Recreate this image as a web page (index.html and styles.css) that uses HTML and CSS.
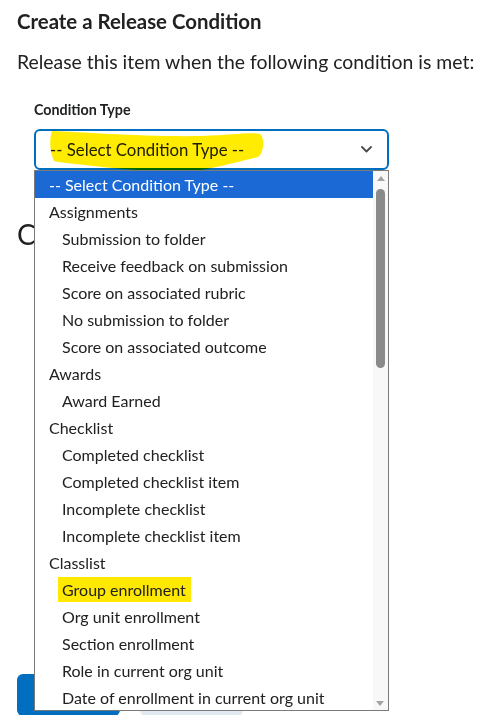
FILE: index.html
```html
<!DOCTYPE html>
<html lang="en">
<head>
    <meta charset="UTF-8">
    <meta name="viewport" content="width=device-width, initial-scale=1.0">
    <title>Create a Release Condition</title>
    <link rel="stylesheet" href="styles.css">
</head>
<body>
    <div class="dialog">
        <h1>Create a Release Condition</h1>
        <p class="intro">Release this item when the following condition is met:</p>

        <div class="field">
            <label class="field-label">Condition Type</label>
            <div class="select">
                <span class="select-value">-- Select Condition Type --</span>
                <svg class="chevron" width="11" height="7" viewBox="0 0 11 7">
                    <path d="M1 1 L5.5 5.5 L10 1" fill="none" stroke="#494c4e" stroke-width="1.8" stroke-linecap="round" stroke-linejoin="round"/>
                </svg>
                <!-- highlighter mark -->
                <svg class="marker" width="216" height="44" viewBox="0 0 216 44">
                    <path d="M2,2 C32,3 92,8 152,7 C182,6 202,3 210,5 C215,8 214,24 208,28 C192,32 172,37 152,41 C122,44 92,42 62,39 C37,36 12,34 4,32 C0,24 -1,9 2,2 Z" fill="#ffec00"/>
                </svg>

                <div class="options">
                    <ul class="option-list">
                        <li class="option selected">-- Select Condition Type --</li>
                        <li class="option group">Assignments</li>
                        <li class="option">Submission to folder</li>
                        <li class="option">Receive feedback on submission</li>
                        <li class="option">Score on associated rubric</li>
                        <li class="option">No submission to folder</li>
                        <li class="option">Score on associated outcome</li>
                        <li class="option group">Awards</li>
                        <li class="option">Award Earned</li>
                        <li class="option group">Checklist</li>
                        <li class="option">Completed checklist</li>
                        <li class="option">Completed checklist item</li>
                        <li class="option">Incomplete checklist</li>
                        <li class="option">Incomplete checklist item</li>
                        <li class="option group">Classlist</li>
                        <li class="option"><mark>Group enrollment</mark></li>
                        <li class="option">Org unit enrollment</li>
                        <li class="option">Section enrollment</li>
                        <li class="option">Role in current org unit</li>
                        <li class="option">Date of enrollment in current org unit</li>
                    </ul>
                    <div class="scrollbar">
                        <span class="arrow up"></span>
                        <span class="thumb"></span>
                        <span class="arrow down"></span>
                    </div>
                </div>
            </div>
        </div>

        <h2>Conditions</h2>

        <div class="actions">
            <button class="btn primary">Create</button>
            <button class="btn">Cancel</button>
        </div>
    </div>
</body>
</html>
```

FILE: styles.css
```css
body {
    margin: 0;
    font-family: Lato, "Open Sans", sans-serif;
    color: #202122;
    background: #ffffff;
    overflow: hidden;
}
.dialog {
    padding: 0 17px;
    height: 715px;
}
h1 {
    font-size: 20.4px;
    font-weight: bold;
    margin: 0;
    padding-top: 8px;
    line-height: 26px;
}
.intro {
    font-size: 19.4px;
    margin: 15px 0 0;
    line-height: 26px;
    white-space: nowrap;
    color: #202122;
}
.field {
    padding-left: 17px;
    margin-top: 26px;
}
.field-label {
    display: block;
    font-size: 14.3px;
    font-weight: bold;
    line-height: 18px;
}
.select {
    position: relative;
    margin-top: 10px;
    width: 355px;
    height: 41px;
    box-sizing: border-box;
    border: 2px solid #006fbf;
    border-radius: 6px;
    display: flex;
    align-items: center;
    justify-content: space-between;
    padding: 0 15px 0 14px;
}
.select-value {
    font-size: 16.8px;
    position: relative;
    z-index: 1;
}
.chevron {
    position: relative;
    z-index: 1;
}
.marker {
    position: absolute;
    left: 14px;
    top: -2px;
    overflow: visible;
    mix-blend-mode: multiply;
    z-index: 2;
}
.options {
    position: absolute;
    left: -2px;
    top: 39px;
    width: 355px;
    height: 541px;
    box-sizing: border-box;
    border: 1px solid #7a7a7a;
    background: #ffffff;
    display: flex;
    z-index: 3;
    overflow: hidden;
}
.option-list {
    list-style: none;
    margin: 0;
    padding: 0;
    flex: 1;
}
.option {
    height: 27px;
    line-height: 27px;
    font-size: 16px;
    padding-left: 27px;
    white-space: nowrap;
}
.option.group {
    padding-left: 14px;
}
.option.selected {
    background: #1a69d5;
    color: #ffffff;
    padding-left: 14px;
}
.option mark {
    background: #ffe900;
    color: #202122;
    padding: 3px 5px 3px 4px;
    margin-left: -4px;
}
.scrollbar {
    width: 15px;
    background: #f8f8f8;
    position: relative;
    display: flex;
    flex-direction: column;
    align-items: center;
}
.arrow {
    width: 0;
    height: 0;
    border-left: 4px solid transparent;
    border-right: 4px solid transparent;
}
.arrow.up {
    margin-top: 5px;
    border-bottom: 5px solid #a3a3a3;
}
.arrow.down {
    position: absolute;
    bottom: 4px;
    left: 3px;
    border-top: 5px solid #a3a3a3;
}
.thumb {
    margin-top: 8px;
    width: 9px;
    height: 179px;
    border-radius: 5px;
    background: #8a8a8a;
}
h2 {
    font-size: 28px;
    font-weight: normal;
    margin: 46px 0 0;
    line-height: 36px;
}
.actions {
    display: flex;
    gap: 20px;
    margin-top: 422px;
}
.btn {
    font-family: inherit;
    font-size: 15px;
    font-weight: bold;
    width: 103px;
    height: 42px;
    border: none;
    border-radius: 6px;
    background: #e3e9f1;
    color: #202122;
}
.btn.primary {
    background: #006fbf;
    color: #ffffff;
}
```
